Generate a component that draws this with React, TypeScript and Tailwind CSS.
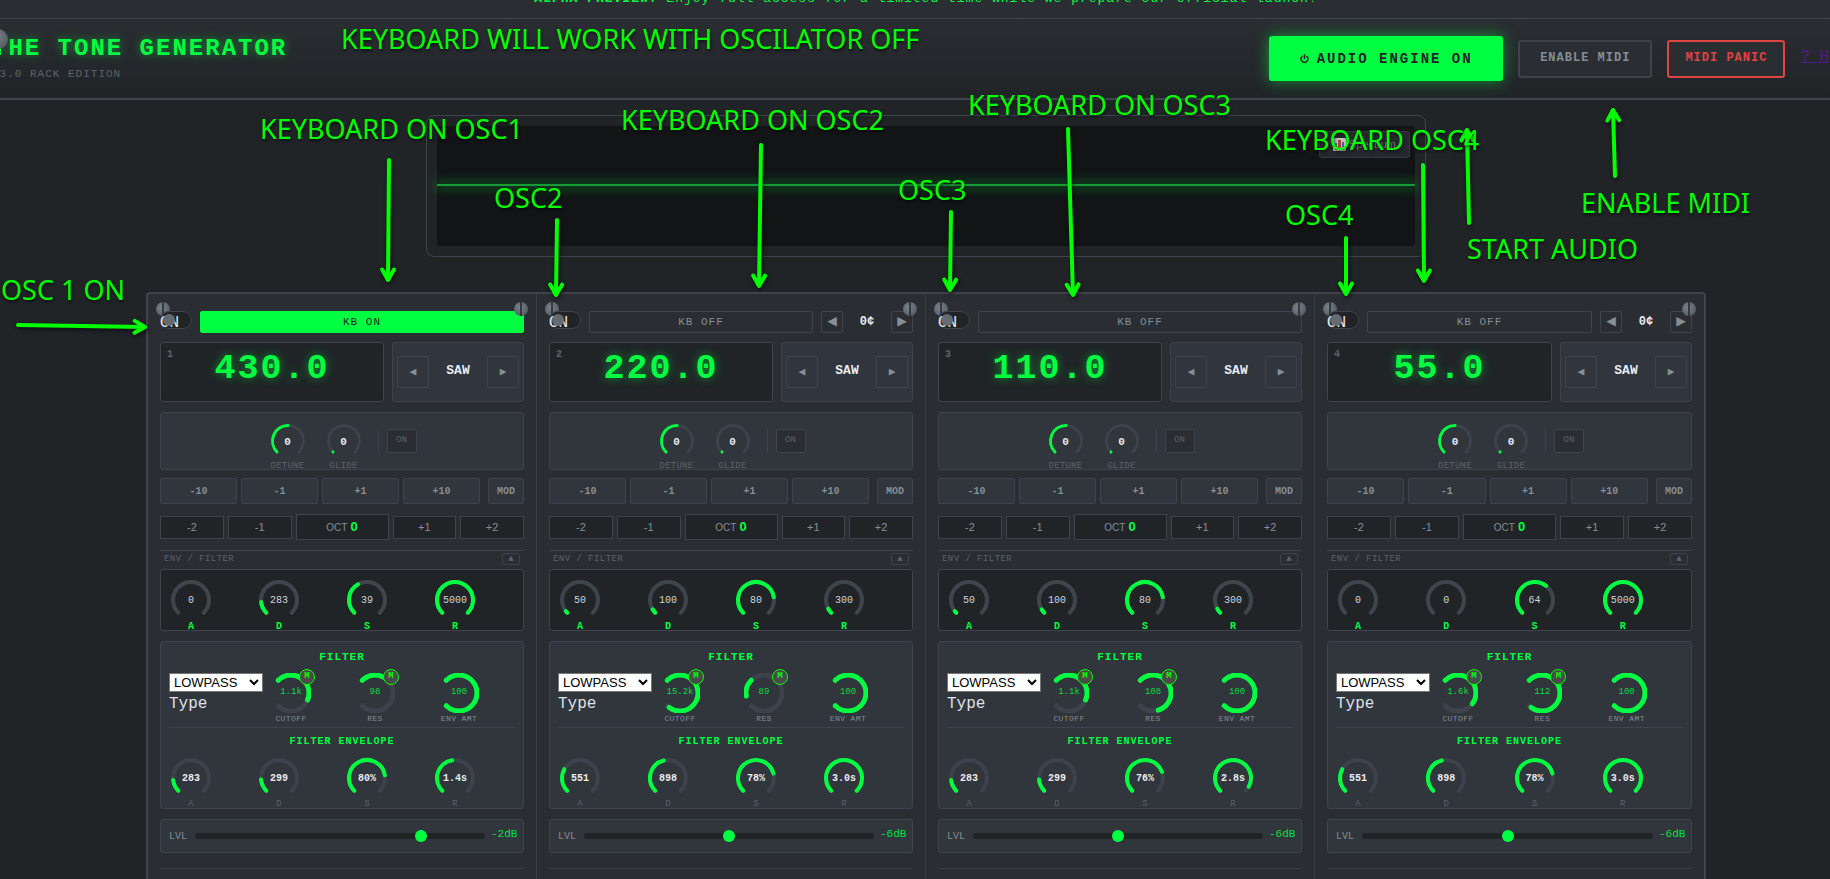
import { useState } from 'react'
import { Power } from 'lucide-react'

interface Envelope {
  label: string
  text: string
  amount: number
}

interface FilterKnob {
  label: string
  text: string
  sweep: number
  mod: boolean
}

interface Oscillator {
  id: number
  frequency: string
  keyboard: boolean
  cents: boolean
  amp: Envelope[]
  filter: FilterKnob[]
  filterEnv: Envelope[]
  level: number
  db: string
}

const oscillators: Oscillator[] = [
  {
    id: 1,
    frequency: '430.0',
    keyboard: true,
    cents: false,
    amp: [
      { label: 'A', text: '0', amount: 0 },
      { label: 'D', text: '283', amount: 0.142 },
      { label: 'S', text: '39', amount: 0.39 },
      { label: 'R', text: '5000', amount: 1 },
    ],
    filter: [
      { label: 'CUTOFF', text: '1.1k', sweep: 158, mod: true },
      { label: 'RES', text: '98', sweep: 75, mod: true },
      { label: 'ENV AMT', text: '100', sweep: 270, mod: false },
    ],
    filterEnv: [
      { label: 'A', text: '283', amount: 0.142 },
      { label: 'D', text: '299', amount: 0.15 },
      { label: 'S', text: '80%', amount: 0.8 },
      { label: 'R', text: '1.4s', amount: 0.467 },
    ],
    level: 79,
    db: '-2dB',
  },
  {
    id: 2,
    frequency: '220.0',
    keyboard: false,
    cents: true,
    amp: [
      { label: 'A', text: '50', amount: 0.025 },
      { label: 'D', text: '100', amount: 0.05 },
      { label: 'S', text: '80', amount: 0.8 },
      { label: 'R', text: '300', amount: 0.06 },
    ],
    filter: [
      { label: 'CUTOFF', text: '15.2k', sweep: 262, mod: true },
      { label: 'RES', text: '89', sweep: -55, mod: true },
      { label: 'ENV AMT', text: '100', sweep: 270, mod: false },
    ],
    filterEnv: [
      { label: 'A', text: '551', amount: 0.276 },
      { label: 'D', text: '898', amount: 0.45 },
      { label: 'S', text: '78%', amount: 0.78 },
      { label: 'R', text: '3.0s', amount: 1 },
    ],
    level: 50,
    db: '-6dB',
  },
  {
    id: 3,
    frequency: '110.0',
    keyboard: false,
    cents: false,
    amp: [
      { label: 'A', text: '50', amount: 0.025 },
      { label: 'D', text: '100', amount: 0.05 },
      { label: 'S', text: '80', amount: 0.8 },
      { label: 'R', text: '300', amount: 0.06 },
    ],
    filter: [
      { label: 'CUTOFF', text: '1.1k', sweep: 158, mod: true },
      { label: 'RES', text: '108', sweep: 208, mod: true },
      { label: 'ENV AMT', text: '100', sweep: 270, mod: false },
    ],
    filterEnv: [
      { label: 'A', text: '283', amount: 0.142 },
      { label: 'D', text: '299', amount: 0.15 },
      { label: 'S', text: '76%', amount: 0.76 },
      { label: 'R', text: '2.8s', amount: 0.94 },
    ],
    level: 50,
    db: '-6dB',
  },
  {
    id: 4,
    frequency: '55.0',
    keyboard: false,
    cents: true,
    amp: [
      { label: 'A', text: '0', amount: 0 },
      { label: 'D', text: '0', amount: 0 },
      { label: 'S', text: '64', amount: 0.64 },
      { label: 'R', text: '5000', amount: 1 },
    ],
    filter: [
      { label: 'CUTOFF', text: '1.6k', sweep: 172, mod: true },
      { label: 'RES', text: '112', sweep: 262, mod: true },
      { label: 'ENV AMT', text: '100', sweep: 270, mod: false },
    ],
    filterEnv: [
      { label: 'A', text: '551', amount: 0.276 },
      { label: 'D', text: '898', amount: 0.45 },
      { label: 'S', text: '78%', amount: 0.78 },
      { label: 'R', text: '3.0s', amount: 1 },
    ],
    level: 50,
    db: '-6dB',
  },
]

// angles are in degrees, clockwise from 12 o'clock
function arcPath(size: number, radius: number, start: number, end: number) {
  const from = Math.min(start, end)
  const to = Math.max(start, end)
  const point = (deg: number) => {
    const rad = ((deg - 90) * Math.PI) / 180
    const x = size / 2 + radius * Math.cos(rad)
    const y = size / 2 + radius * Math.sin(rad)
    return `${x.toFixed(2)} ${y.toFixed(2)}`
  }
  const large = to - from > 180 ? 1 : 0
  return `M ${point(from)} A ${radius} ${radius} 0 ${large} 1 ${point(to)}`
}

interface DialProps {
  size: number
  radius: number
  stroke: number
  start: number
  sweep: number
  track: string
  dot?: boolean
}

function Dial({ size, radius, stroke, start, sweep, track, dot }: DialProps) {
  return (
    <svg width={size} height={size} viewBox={`0 0 ${size} ${size}`} fill="none" strokeLinecap="round" className="block">
      <path d={arcPath(size, radius, start, start + 270)} stroke={track} strokeWidth={stroke} />
      {(sweep !== 0 || dot) && (
        <path d={arcPath(size, radius, start, start + (sweep || 0.1))} stroke="#00ff41" strokeWidth={stroke} />
      )}
    </svg>
  )
}

function Screw({ className }: { className: string }) {
  return (
    <span
      className={`absolute flex justify-center rounded-full bg-radial-[at_40%_40%] from-[#7a828a] to-[#495057] ${className}`}
    >
      <span className="h-full w-0.5 bg-[#343a40]" />
    </span>
  )
}

function SmallKnob({ label, sweep, dot }: { label: string; sweep: number; dot?: boolean }) {
  return (
    <div className="flex w-10 flex-col items-center">
      <div className="relative">
        <Dial size={40} radius={15.5} stroke={3} start={-135} sweep={sweep} track="#3d424b" dot={dot} />
        <span className="absolute inset-0 flex items-center justify-center pt-0.5 text-[11px] font-bold text-[#e9ecef]">
          0
        </span>
      </div>
      <span className="text-[9px] leading-[10px] tracking-wide text-[#5c636a]">{label}</span>
    </div>
  )
}

function EnvelopeKnobs({ items, bright }: { items: Envelope[]; bright: boolean }) {
  return (
    <div className="grid grid-cols-4 gap-1.5">
      {items.map((item) => (
        <div key={item.label} className="flex w-11 flex-col items-center">
          <div className="relative">
            <Dial
              size={44}
              radius={18}
              stroke={4}
              start={-135}
              sweep={item.amount * 270}
              track={bright ? '#3f454c' : '#3d424b'}
            />
            <span
              className={`absolute inset-0 flex items-center justify-center text-[10px] ${
                bright ? 'text-[#ced4da]' : 'font-bold text-[#e9ecef]'
              }`}
            >
              {item.text}
            </span>
          </div>
          <span
            className={
              bright
                ? 'text-[10px] leading-[10px] font-bold text-[#00ff41]'
                : 'text-[9px] leading-[8px] text-[#5c636a]'
            }
          >
            {item.label}
          </span>
        </div>
      ))}
    </div>
  )
}

function OscillatorStrip({ osc }: { osc: Oscillator }) {
  const [keyboard, setKeyboard] = useState(osc.keyboard)
  const [level, setLevel] = useState(osc.level)
  const typeId = `filter-type-${osc.id}`
  const levelId = `level-${osc.id}`

  return (
    <section className="relative border-r border-[#3a3f46] px-3 pt-[17px] last:border-r-0">
      <Screw className="top-2 left-2 size-3.5" />

      <div className="flex items-start gap-2">
        <label className="relative h-[18px] w-8 shrink-0 rounded-full border border-[#3d444d] bg-[#202427]">
          <input type="checkbox" className="sr-only" />
          <span className="absolute top-px -left-px text-base leading-5 text-[#e9ecef]">ON</span>
          <span className="absolute top-0.5 left-0.5 size-3 rounded-full bg-[#646b72]" />
        </label>
        <button
          onClick={() => setKeyboard(!keyboard)}
          className={`h-[22px] flex-1 rounded-xs border text-[11px] tracking-[1px] ${
            keyboard ? 'border-[#00ff41] bg-[#00ff41] text-[#202427]' : 'border-[#3d444d] text-[#868e96]'
          }`}
        >
          {keyboard ? 'KB ON' : 'KB OFF'}
        </button>
        {osc.cents && (
          <div className="flex w-[92px] items-center justify-between">
            <button className="flex size-[22px] items-center justify-center rounded-xs border border-[#3d444d] text-base leading-5 text-[#868e96]">
              ◀
            </button>
            <span className="text-xs font-bold text-[#e9ecef]">0¢</span>
            <button className="flex size-[22px] items-center justify-center rounded-xs border border-[#3d444d] text-base leading-5 text-[#868e96]">
              ▶
            </button>
          </div>
        )}
      </div>
      <Screw className="top-2 right-2 size-3.5" />

      <div className="mt-[9px] flex gap-2">
        <div className="relative h-[60px] flex-1 rounded-[3px] border border-[#3d444d] bg-[#202427] text-center text-[35px] leading-[52px] font-bold tracking-[2px] text-[#00ff41] [text-shadow:0_0_10px_rgba(0,255,65,0.5)]">
          <span className="absolute top-1.5 left-1.5 text-[10px] leading-3 tracking-normal text-[#5c636a] [text-shadow:none]">
            {osc.id}
          </span>
          {osc.frequency}
        </div>
        <div className="flex h-[60px] w-[132px] items-center justify-between rounded-[3px] border border-[#3d444d] bg-[#31353d] px-1">
          <button className="size-8 rounded-xs border border-[#3d444d] text-[11px] text-[#868e96]">◀</button>
          <span className="pb-0.5 text-[13px] font-bold text-[#e9ecef]">SAW</span>
          <button className="size-8 rounded-xs border border-[#3d444d] text-[11px] text-[#868e96]">▶</button>
        </div>
      </div>

      <div className="mt-2.5 flex h-[58px] justify-center gap-2 overflow-hidden rounded-[3px] border border-[#3d444d] bg-[#31353c] pt-2">
        <div className="flex gap-4">
          <SmallKnob label="DETUNE" sweep={135} />
          <SmallKnob label="GLIDE" sweep={0} dot />
        </div>
        <div className="mt-2 ml-1.5 h-6 w-px bg-[#3d444d]" />
        <button className="mt-2 h-6 w-[30px] rounded-xs border border-[#3d444d] bg-[#2a2d32] text-[9px] text-[#5c636a]">
          ON
        </button>
      </div>

      <div className="mt-2 flex gap-1 text-[10px] font-bold text-[#868e96]">
        {['-10', '-1', '+1', '+10'].map((step) => (
          <button key={step} className="h-[26px] flex-1 rounded-xs border border-[#3d444d] bg-[#31353c]">
            {step}
          </button>
        ))}
        <button className="ml-1 h-[26px] w-9 rounded-xs border border-[#3d444d] bg-[#31353c]">MOD</button>
      </div>

      <div className="mt-2.5 flex items-center gap-1 font-['Liberation_Sans',Arial,sans-serif] text-[11px] text-[#868e96]">
        <button className="h-[23px] flex-1 border border-[#3d444d] bg-[#202427]">-2</button>
        <button className="h-[23px] flex-1 border border-[#3d444d] bg-[#202427]">-1</button>
        <div className="flex h-[26px] w-[93px] items-baseline justify-center gap-[3px] border border-[#3d444d] bg-[#202427] text-[10px] leading-6">
          OCT <span className="text-[13px] font-bold text-[#00ff41]">0</span>
        </div>
        <button className="h-[23px] flex-1 border border-[#3d444d] bg-[#202427]">+1</button>
        <button className="h-[23px] flex-1 border border-[#3d444d] bg-[#202427]">+2</button>
      </div>

      <div className="mt-2.5 flex items-center justify-between border-t border-[#3d444d] px-1 pt-0.5 pb-1">
        <span className="text-[9px] leading-3 tracking-wider text-[#5c636a]">ENV / FILTER</span>
        <button className="flex h-3 w-[18px] items-center justify-center rounded-xs border border-[#3d444d] text-[9px] leading-[10px] text-[#5c636a]">
          ▲
        </button>
      </div>

      <div className="h-[62px] overflow-hidden rounded-[3px] border border-[#3d444d] bg-[#202427] p-2">
        <EnvelopeKnobs items={osc.amp} bright />
      </div>

      <div className="mt-2.5 h-[168px] overflow-hidden rounded-[3px] border border-[#3d444d] bg-[#31353c] p-2">
        <h3 className="text-center text-[11px] leading-[14px] font-bold tracking-[1px] text-[#00ff41]">FILTER</h3>
        <div className="mt-2 grid h-14 grid-cols-[94px_1fr_1fr_1fr] gap-2 border-b border-[#3d444d] pt-px">
          <div className="flex flex-col">
            <select
              id={typeId}
              className="h-[19px] w-[94px] border border-[#767676] bg-white font-['Liberation_Sans',Arial,sans-serif] text-[13px] leading-4 text-black"
            >
              <option>LOWPASS</option>
              <option>HIGHPASS</option>
              <option>BANDPASS</option>
            </select>
            <label htmlFor={typeId} className="text-base leading-6 text-[#dee2e6]">
              Type
            </label>
          </div>
          {osc.filter.map((knob) => (
            <div key={knob.label} className="flex w-10 flex-col items-center">
              <div className="relative">
                <Dial size={40} radius={18} stroke={5} start={-45} sweep={knob.sweep} track="#3d424b" />
                <span className="absolute inset-0 flex items-center justify-center text-[9px] text-[#06dc3e]">
                  {knob.text}
                </span>
                {knob.mod && (
                  <button className="absolute -top-1 -right-1 flex size-4 items-center justify-center rounded-full border border-[#00ff00] bg-[#4a4a4a] text-[9px] font-bold text-[#00ff00]">
                    M
                  </button>
                )}
              </div>
              <span className="text-[8px] leading-3 tracking-wider whitespace-nowrap text-[#868e96]">{knob.label}</span>
            </div>
          ))}
        </div>
        <h3 className="mt-2 mb-2 text-center text-[10px] leading-3 font-bold tracking-[1px] text-[#00ff41]">
          FILTER ENVELOPE
        </h3>
        <EnvelopeKnobs items={osc.filterEnv} bright={false} />
      </div>

      <div className="mt-2.5 flex h-[34px] items-center rounded-[3px] border border-[#3d444d] bg-[#31353c] pr-1.5 pl-2">
        <label htmlFor={levelId} className="mr-2 w-[18px] text-[10px] text-[#868e96]">
          LVL
        </label>
        <input
          id={levelId}
          type="range"
          min={0}
          max={100}
          value={level}
          onChange={(e) => setLevel(Number(e.target.value))}
          className="mr-1.5 h-1.5 min-w-0 flex-1 appearance-none rounded-full bg-[#202427] [&::-webkit-slider-thumb]:size-3 [&::-webkit-slider-thumb]:appearance-none [&::-webkit-slider-thumb]:rounded-full [&::-webkit-slider-thumb]:bg-[#00ff41]"
        />
        <span className="w-[26px] pb-1 text-right text-[11px] text-[#06e03f]">{osc.db}</span>
      </div>

      <div className="mt-[15px] border-t border-[#3a3f46]" />
    </section>
  )
}

const notes = [
  { text: 'KEYBOARD WILL WORK WITH OSCILATOR OFF', x: 341, y: 25 },
  { text: 'KEYBOARD ON OSC1', x: 260, y: 115 },
  { text: 'KEYBOARD ON OSC2', x: 621, y: 106 },
  { text: 'KEYBOARD ON OSC3', x: 968, y: 91 },
  { text: 'KEYBOARD OSC4', x: 1265, y: 126 },
  { text: 'OSC2', x: 494, y: 184 },
  { text: 'OSC3', x: 898, y: 176 },
  { text: 'OSC4', x: 1285, y: 201 },
  { text: 'OSC 1 ON', x: 1, y: 276 },
  { text: 'START AUDIO', x: 1467, y: 235 },
  { text: 'ENABLE MIDI', x: 1581, y: 189 },
]

// [tail x, tail y, tip x, tip y]
const arrows = [
  [389, 160, 388, 280],
  [557, 220, 556, 295],
  [761, 145, 759, 286],
  [951, 212, 950, 290],
  [1068, 129, 1073, 295],
  [1346, 238, 1346, 294],
  [1423, 165, 1424, 281],
  [1469, 223, 1467, 130],
  [1615, 176, 1613, 110],
  [18, 325, 145, 327],
]

function arrowPath([x1, y1, x2, y2]: number[]) {
  const angle = Math.atan2(y2 - y1, x2 - x1)
  const arm = (turn: number) => {
    const a = angle + Math.PI + turn
    return `${(x2 + 12 * Math.cos(a)).toFixed(1)} ${(y2 + 12 * Math.sin(a)).toFixed(1)}`
  }
  return `M${x1} ${y1} L${x2} ${y2} M${arm(0.52)} L${x2} ${y2} L${arm(-0.52)}`
}

function Annotations() {
  return (
    <div className="pointer-events-none absolute inset-0 font-['Noto_Sans',sans-serif] text-[27px] leading-7 text-[#00ff00]">
      <svg className="absolute inset-0 size-full drop-shadow-[1px_2px_2px_rgba(0,0,0,0.6)]" fill="none">
        {arrows.map((arrow) => (
          <path
            key={arrow.join('-')}
            d={arrowPath(arrow)}
            stroke="#00ff00"
            strokeWidth={4}
            strokeLinecap="round"
            strokeLinejoin="round"
          />
        ))}
      </svg>
      {notes.map((note) => (
        <span
          key={note.text}
          className="absolute whitespace-nowrap [text-shadow:1px_2px_3px_rgba(0,0,0,0.6)]"
          style={{ left: note.x, top: note.y }}
        >
          {note.text}
        </span>
      ))}
    </div>
  )
}

export default function App() {
  return (
    <div className="relative flex h-screen flex-col overflow-hidden bg-[#202427] font-['Liberation_Mono',monospace]">
      <div className="-mt-5 flex h-[39px] shrink-0 items-center justify-center border-b border-[#3d444d] bg-[#2a2d32] pl-[22px] text-[13px] tracking-[1px] whitespace-pre text-[#00ff41]">
        <strong>ALPHA PREVIEW:</strong> Enjoy full access for a limited time while we prepare our official launch!
      </div>

      <header className="relative flex h-[81px] shrink-0 items-center justify-between border-b-2 border-[#3d444d] bg-linear-to-b from-[#2a2d32] to-[#202427]">
        <div className="-ml-2 whitespace-nowrap">
          <h1 className="text-2xl leading-7 font-bold tracking-[2px] text-[#00ff41] [text-shadow:0_0_10px_rgba(0,255,65,0.5)]">
            THE TONE GENERATOR
          </h1>
          <p className="mt-1 text-[11px] leading-[15px] tracking-[1px] text-[#5c636a]">V3.0 RACK EDITION</p>
        </div>
        <Screw className="top-2.5 -left-3 size-5" />
        <div className="-mr-7 flex items-center gap-[15px] whitespace-nowrap">
          <button className="flex h-[45px] w-[234px] items-center justify-center gap-2 rounded-[3px] bg-[#00ff41] text-sm font-bold tracking-[2px] text-[#202427] shadow-[0_0_15px_rgba(0,255,65,0.5)]">
            <Power size={9} strokeWidth={4} />
            AUDIO ENGINE ON
          </button>
          <button className="h-[38px] rounded-[3px] border-2 border-[#3d444d] bg-[#2a2d32] px-5 pb-0.5 text-xs font-bold tracking-[1px] text-[#868e96]">
            ENABLE MIDI
          </button>
          <button className="h-[38px] rounded-[3px] border-2 border-[#e04444] bg-[#2a2d32] px-4 pb-0.5 text-xs font-bold tracking-[1px] text-[#e04444]">
            MIDI PANIC
          </button>
          <a href="#help" className="pb-1 text-base text-[#551a8b] underline">
            ? HELP
          </a>
        </div>
      </header>

      <main className="flex flex-1 flex-col pl-[22px]">
        <div className="mx-auto mt-[15px] w-full max-w-[1000px] shrink-0 rounded-lg border border-[#3d444d] p-2.5">
          <div className="relative flex h-[120px] items-center rounded-[3px] bg-[#121416] pb-0.5">
            <div className="h-0.5 w-full bg-[#169c37] shadow-[0_0_12px_2px_rgba(0,255,65,0.35)]" />
            <button className="absolute top-[5px] right-[5px] flex h-[27px] w-[91px] items-center justify-center gap-[3px] rounded-[3px] border border-[#3d444d] bg-[#2a2d32] font-['Liberation_Sans',Arial,sans-serif] text-[11px] text-[#868e96] opacity-80">
              <svg width="13" height="13" viewBox="0 0 13 13">
                <rect width="13" height="13" rx="1" fill="#e9ecef" />
                <rect x="2" y="5" width="2" height="7" fill="#3fae49" />
                <rect x="5" y="2" width="3" height="10" fill="#e0453c" />
                <rect x="9" y="4" width="2" height="8" fill="#2f7fd6" />
              </svg>
              Spectrum
            </button>
          </div>
        </div>

        <div className="mx-auto mt-[35px] grid w-full max-w-[1560px] flex-1 grid-cols-4 rounded-t border-2 border-b-0 border-[#3d444d] bg-[#2a2d32]">
          {oscillators.map((osc) => (
            <OscillatorStrip key={osc.id} osc={osc} />
          ))}
        </div>
      </main>

      <Annotations />
    </div>
  )
}
